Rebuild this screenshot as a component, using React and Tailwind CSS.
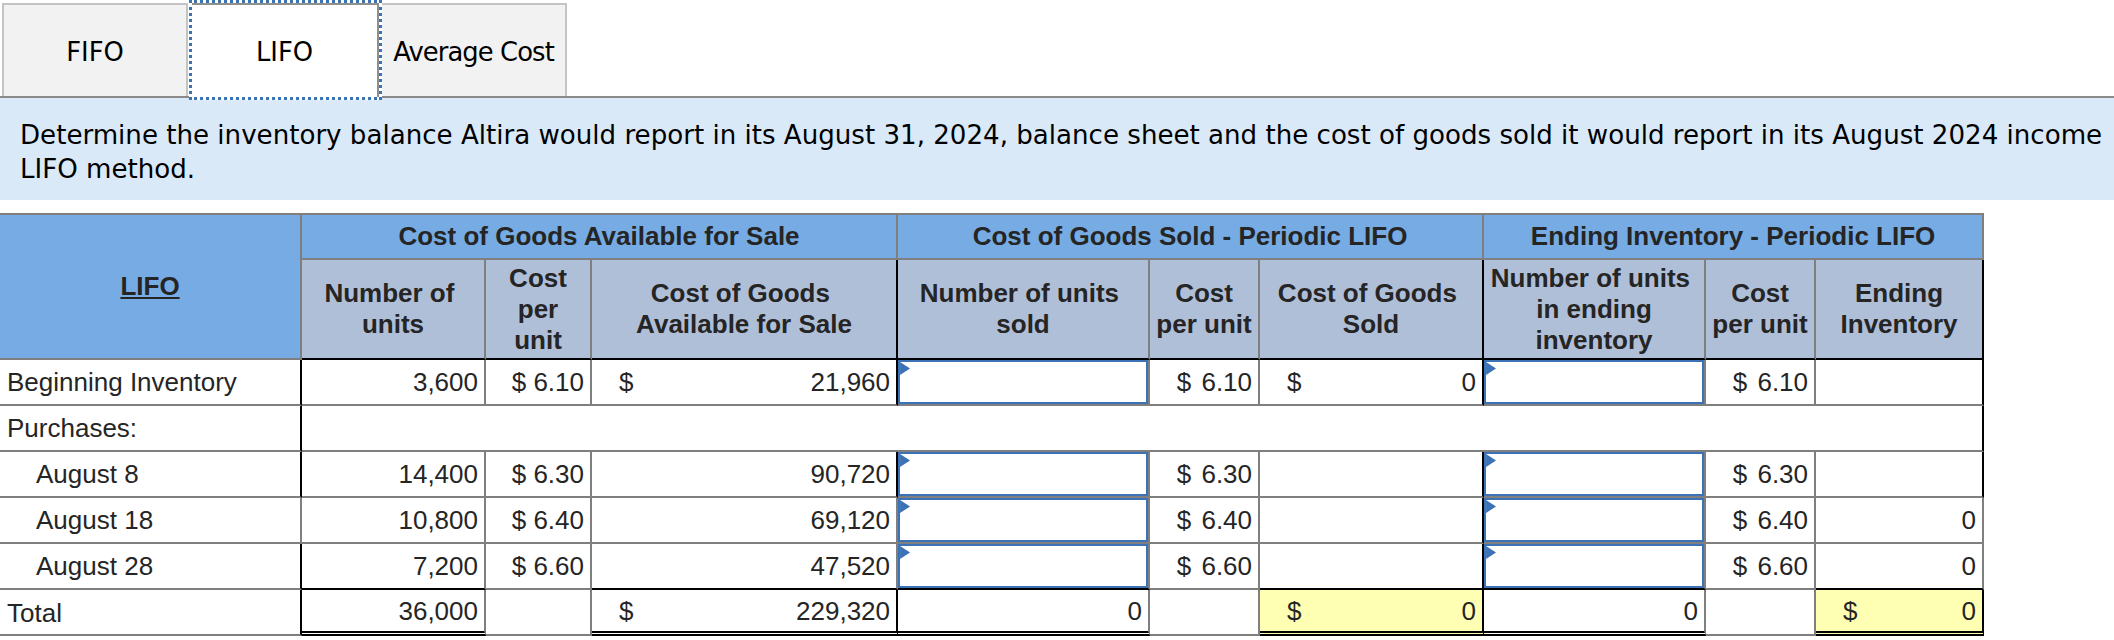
const th = "border-r-2 border-b-2 border-[#7f7f7f] font-bold text-[#252525] text-center align-middle";
const cell = "h-[46px] border-r-2 border-b-2 border-[#7f7f7f] align-middle text-[#252525]";
const td = `${cell} pl-2 pr-[6px] text-right`;
const subHead = `${th} border-b-black bg-[#b0bfd8]`;
const topHead = `${th} border-t-2 bg-[#76abe3]`;
const double = "border-b-[5px] border-double border-b-black pt-[2px]";

function InputCell({ className = "" }) {
  return (
    <td className={`h-[46px] border-r-2 border-b-2 border-[#7f7f7f] p-0 ${className}`}>
      <div className="relative h-[44px] border-2 border-[#3b73b6] bg-white">
        <span className="absolute left-0 top-0 h-[13px] w-[10px] bg-[#3b73b6] [clip-path:polygon(0_0,100%_50%,0_100%)]"></span>
      </div>
    </td>
  );
}

function Dollar({ value }) {
  return (
    <div className="flex justify-between">
      <span className="pl-[19px]">$</span>
      <span>{value}</span>
    </div>
  );
}

function Cost({ value }) {
  return (
    <td className={td}>
      <span className="mr-[3px]">$</span> {value}
    </td>
  );
}

export default function App() {
  return (
    <div className="h-[640px] w-[2114px] overflow-hidden bg-white font-['Liberation_Sans',Arial,sans-serif] text-[26px] leading-[31px]">
      <div className="flex h-[98px] items-end border-b-2 border-[#8a8a8a] pl-[2px] font-['DejaVu_Sans',Verdana,sans-serif] text-[25.8px] text-black">
        <div className="flex h-[93px] w-[186px] items-center justify-center border-2 border-b-0 border-[#c4c4c4] bg-[#f2f2f2] pt-[3px]">FIFO</div>
        <div className="relative z-10 ml-[1px] h-[100px] w-[193px] self-start border-[3px] border-dotted border-[#3b73b6] bg-white">
          <div className="flex h-full items-center justify-center border-t-2 border-r-2 border-[#8f8f8f] pt-[3px]">LIFO</div>
        </div>
        <div className="flex h-[93px] w-[185px] items-center justify-center border-2 border-b-0 border-l-0 border-[#c4c4c4] bg-[#f2f2f2] pt-[3px] tracking-[-0.9px]">Average Cost</div>
      </div>

      <div className="h-[102px] whitespace-nowrap bg-[#d9e9f8] pl-[20px] pt-[20px] font-['DejaVu_Sans',Verdana,sans-serif] text-[26.1px] leading-[34px] text-black">
        Determine the inventory balance Altira would report in its August 31, 2024, balance sheet and the cost of goods sold it would report in its August 2024 income
        <br />
        LIFO method.
      </div>

      <table className="mt-[13px] w-[1984px] table-fixed border-separate border-spacing-0">
        <colgroup>
          <col className="w-[302px]" />
          <col className="w-[184px]" />
          <col className="w-[106px]" />
          <col className="w-[306px]" />
          <col className="w-[252px]" />
          <col className="w-[110px]" />
          <col className="w-[224px]" />
          <col className="w-[222px]" />
          <col className="w-[110px]" />
          <col className="w-[168px]" />
        </colgroup>
        <thead>
          <tr>
            <th rowSpan={2} className={`${topHead} underline`}>LIFO</th>
            <th colSpan={3} className={`${topHead} h-[47px]`}>Cost of Goods Available for Sale</th>
            <th colSpan={3} className={topHead}>Cost of Goods Sold - Periodic LIFO</th>
            <th colSpan={3} className={topHead}>Ending Inventory - Periodic LIFO</th>
          </tr>
          <tr>
            <th className={`${subHead} h-[100px]`}>Number of&nbsp;<br />units</th>
            <th className={subHead}>Cost<br />per<br />unit</th>
            <th className={`${subHead} border-r-black`}>Cost of Goods&nbsp;<br />Available for Sale</th>
            <th className={subHead}>Number of units&nbsp;<br />sold</th>
            <th className={subHead}>Cost<br />per unit</th>
            <th className={`${subHead} border-r-black`}>Cost of Goods&nbsp;<br />Sold</th>
            <th className={subHead}>Number of units&nbsp;<br />in ending<br />inventory</th>
            <th className={subHead}>Cost<br />per unit</th>
            <th className={`${subHead} border-r-black`}>Ending<br />Inventory</th>
          </tr>
        </thead>
        <tbody>
          <tr>
            <td className={`${cell} border-r-black pl-[7px] text-left`}>Beginning Inventory</td>
            <td className={td}>3,600</td>
            <td className={td}>$ 6.10</td>
            <td className={`${td} border-r-black`}><Dollar value="21,960" /></td>
            <InputCell />
            <Cost value="6.10" />
            <td className={`${td} border-r-black`}><Dollar value="0" /></td>
            <InputCell />
            <Cost value="6.10" />
            <td className={`${td} border-r-black`}></td>
          </tr>
          <tr>
            <td className={`${cell} border-r-black pl-[7px] text-left`}>Purchases:</td>
            <td colSpan={9} className={`${td} border-r-black`}></td>
          </tr>
          <tr>
            <td className={`${cell} border-r-black pl-[36px] text-left`}>August 8</td>
            <td className={td}>14,400</td>
            <td className={td}>$ 6.30</td>
            <td className={`${td} border-r-black`}>90,720</td>
            <InputCell />
            <Cost value="6.30" />
            <td className={`${td} border-r-black`}></td>
            <InputCell />
            <Cost value="6.30" />
            <td className={`${td} border-r-black`}></td>
          </tr>
          <tr>
            <td className={`${cell} pl-[36px] text-left`}>August 18</td>
            <td className={td}>10,800</td>
            <td className={td}>$ 6.40</td>
            <td className={td}>69,120</td>
            <InputCell />
            <Cost value="6.40" />
            <td className={`${td} border-r-black`}></td>
            <InputCell />
            <Cost value="6.40" />
            <td className={td}>0</td>
          </tr>
          <tr>
            <td className={`${cell} border-r-black pl-[36px] text-left`}>August 28</td>
            <td className={`${td} border-b-black`}>7,200</td>
            <td className={td}>$ 6.60</td>
            <td className={`${td} border-b-black`}>47,520</td>
            <InputCell className="border-b-black" />
            <Cost value="6.60" />
            <td className={`${td} border-r-black border-b-black`}></td>
            <InputCell className="border-b-black" />
            <Cost value="6.60" />
            <td className={`${td} border-b-black`}>0</td>
          </tr>
          <tr>
            <td className={`${cell} border-r-black pl-[7px] pt-[2px] text-left`}>Total</td>
            <td className={`${td} ${double}`}>36,000</td>
            <td className={td}></td>
            <td className={`${td} ${double} border-r-black`}><Dollar value="229,320" /></td>
            <td className={`${td} ${double}`}>0</td>
            <td className={td}></td>
            <td className={`${td} ${double} border-r-black bg-[#ffffb3]`}><Dollar value="0" /></td>
            <td className={`${td} ${double}`}>0</td>
            <td className={td}></td>
            <td className={`${td} ${double} border-r-black bg-[#ffffb3]`}><Dollar value="0" /></td>
          </tr>
        </tbody>
      </table>
    </div>
  );
}
